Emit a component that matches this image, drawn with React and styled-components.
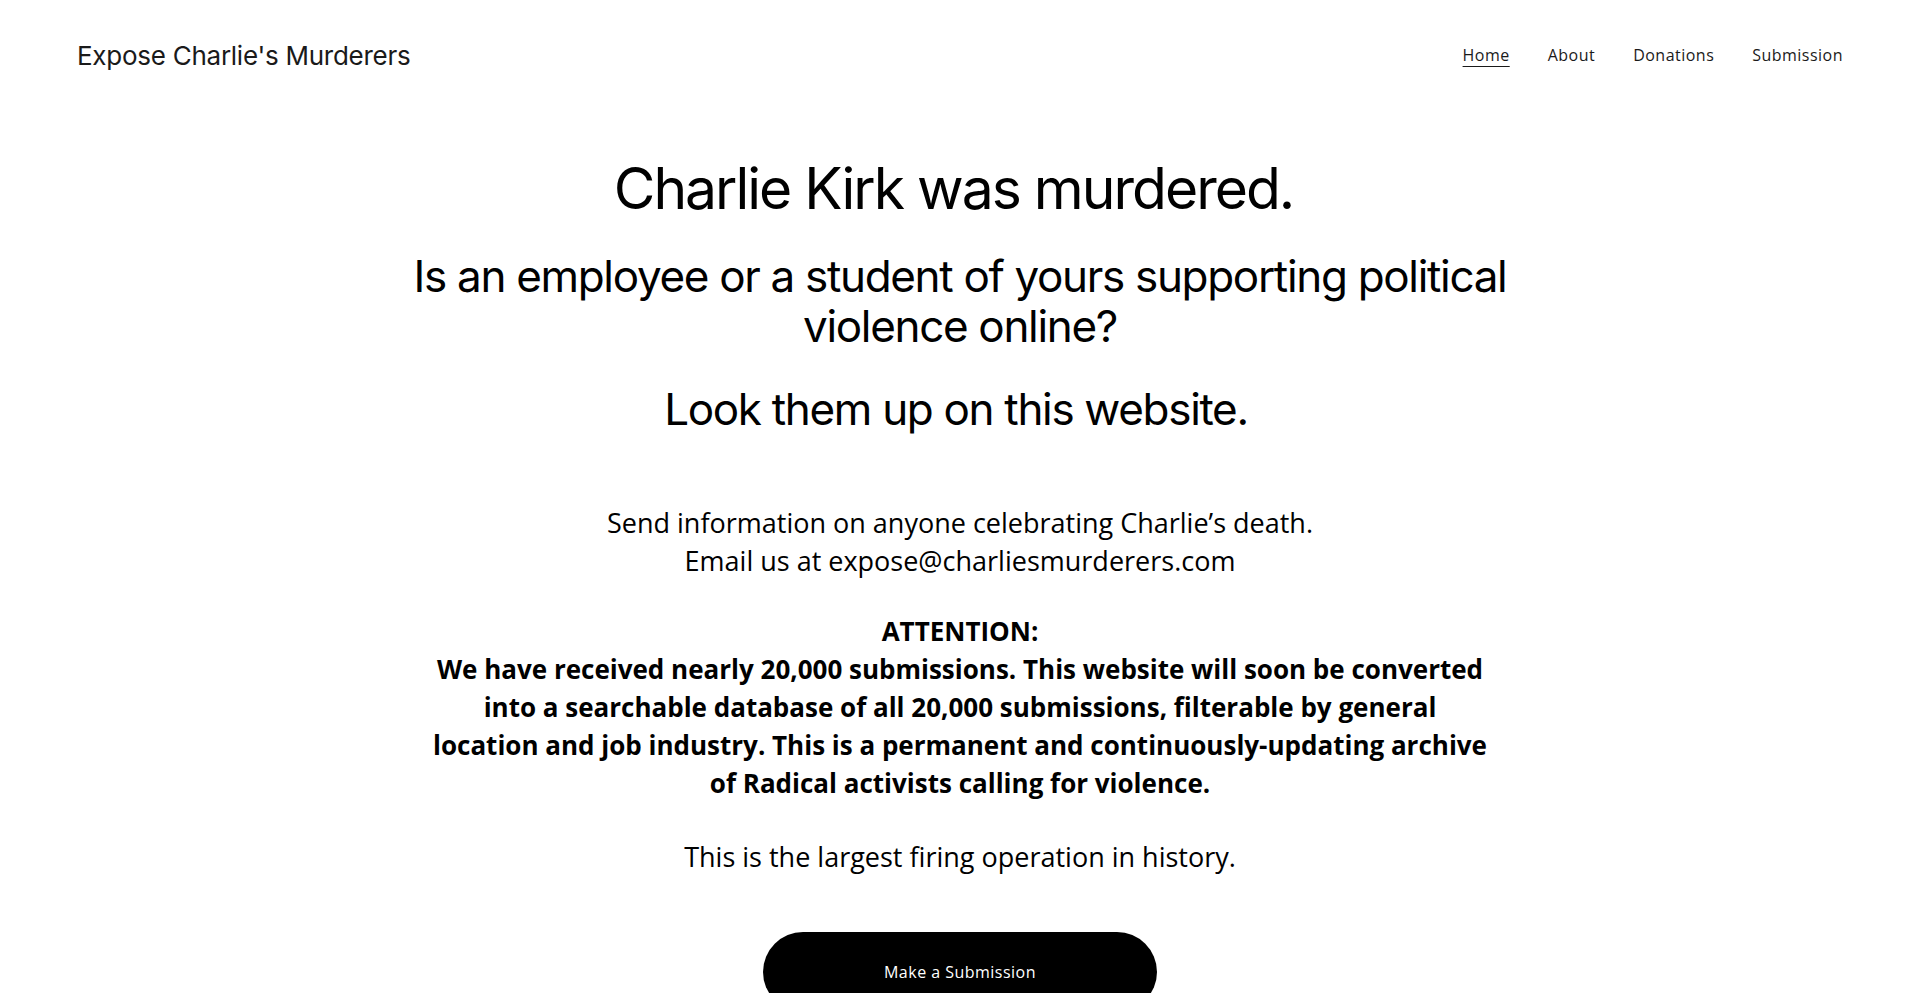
import React from "react";
import styled, { createGlobalStyle } from "styled-components";

const GlobalStyles = createGlobalStyle`
  html, body {
    margin: 0;
    padding: 0;
    background: #ffffff;
    color: #000000;
  }
  * {
    box-sizing: border-box;
  }
`;

const headingFont = `Inter, "Noto Sans", sans-serif`;
const bodyFont = `"Open Sans", "Noto Sans", sans-serif`;

const Page = styled.div`
  min-height: 993px;
  overflow: hidden;
`;

const Header = styled.header`
  display: flex;
  align-items: center;
  justify-content: space-between;
  height: 110px;
  padding: 0 77px;
`;

const Logo = styled.a`
  font-family: ${headingFont};
  font-size: 26px;
  letter-spacing: -0.01em;
  color: #1a1a1a;
  text-decoration: none;
`;

const Nav = styled.nav`
  display: flex;
  align-items: center;
  gap: 38px;
`;

const NavLink = styled.a`
  font-family: ${bodyFont};
  font-size: 16px;
  letter-spacing: 0.03em;
  color: #1a1a1a;
  text-decoration: ${(p) => (p.$active ? "underline" : "none")};
  text-underline-offset: 5px;
  text-decoration-thickness: 1px;
`;

const Main = styled.main`
  display: flex;
  flex-direction: column;
  align-items: center;
  text-align: center;
  padding-top: 45px;
`;

const Title = styled.h1`
  margin: 0;
  padding-right: 13px;
  font-family: ${headingFont};
  font-weight: 400;
  font-size: 57px;
  line-height: 68px;
  letter-spacing: -0.035em;
`;

const Subtitle = styled.h2`
  margin: ${(p) => p.$top}px 0 0;
  padding-right: ${(p) => p.$shift || 0}px;
  font-family: ${headingFont};
  font-weight: 400;
  font-size: 44px;
  line-height: 50px;
  letter-spacing: -0.03em;
`;

const Text = styled.p`
  margin: ${(p) => p.$top}px 0 0;
  font-family: ${bodyFont};
  font-weight: ${(p) => (p.$bold ? 700 : 400)};
  font-size: ${(p) => (p.$bold ? 26 : 27)}px;
  line-height: 38px;
`;

const Button = styled.a`
  display: flex;
  align-items: center;
  justify-content: center;
  margin-top: 56px;
  width: 394px;
  height: 80px;
  border-radius: 300px;
  background: #000000;
  color: #ffffff;
  font-family: ${bodyFont};
  font-size: 16px;
  letter-spacing: 0.03em;
  text-decoration: none;
`;

const navItems = ["Home", "About", "Donations", "Submission"];

export default function App() {
  return (
    <Page>
      <GlobalStyles />
      <Header>
        <Logo href="#">Expose Charlie's Murderers</Logo>
        <Nav>
          {navItems.map((item) => (
            <NavLink key={item} href="#" $active={item === "Home"}>
              {item}
            </NavLink>
          ))}
        </Nav>
      </Header>
      <Main>
        <Title>Charlie Kirk was murdered.</Title>
        <Subtitle $top={28}>
          Is an employee or a student of yours supporting political
          <br />
          violence online?
        </Subtitle>
        <Subtitle $top={33} $shift={8}>
          Look them up on this website.
        </Subtitle>
        <Text $top={70}>
          Send information on anyone celebrating Charlie’s death.
          <br />
          Email us at expose@charliesmurderers.com
        </Text>
        <Text $top={32} $bold>
          ATTENTION:
          <br />
          We have received nearly 20,000 submissions. This website will soon be converted
          <br />
          into a searchable database of all 20,000 submissions, filterable by general
          <br />
          location and job industry. This is a permanent and continuously-updating archive
          <br />
          of Radical activists calling for violence.
        </Text>
        <Text $top={36}>This is the largest firing operation in history.</Text>
        <Button href="#">Make a Submission</Button>
      </Main>
    </Page>
  );
}
